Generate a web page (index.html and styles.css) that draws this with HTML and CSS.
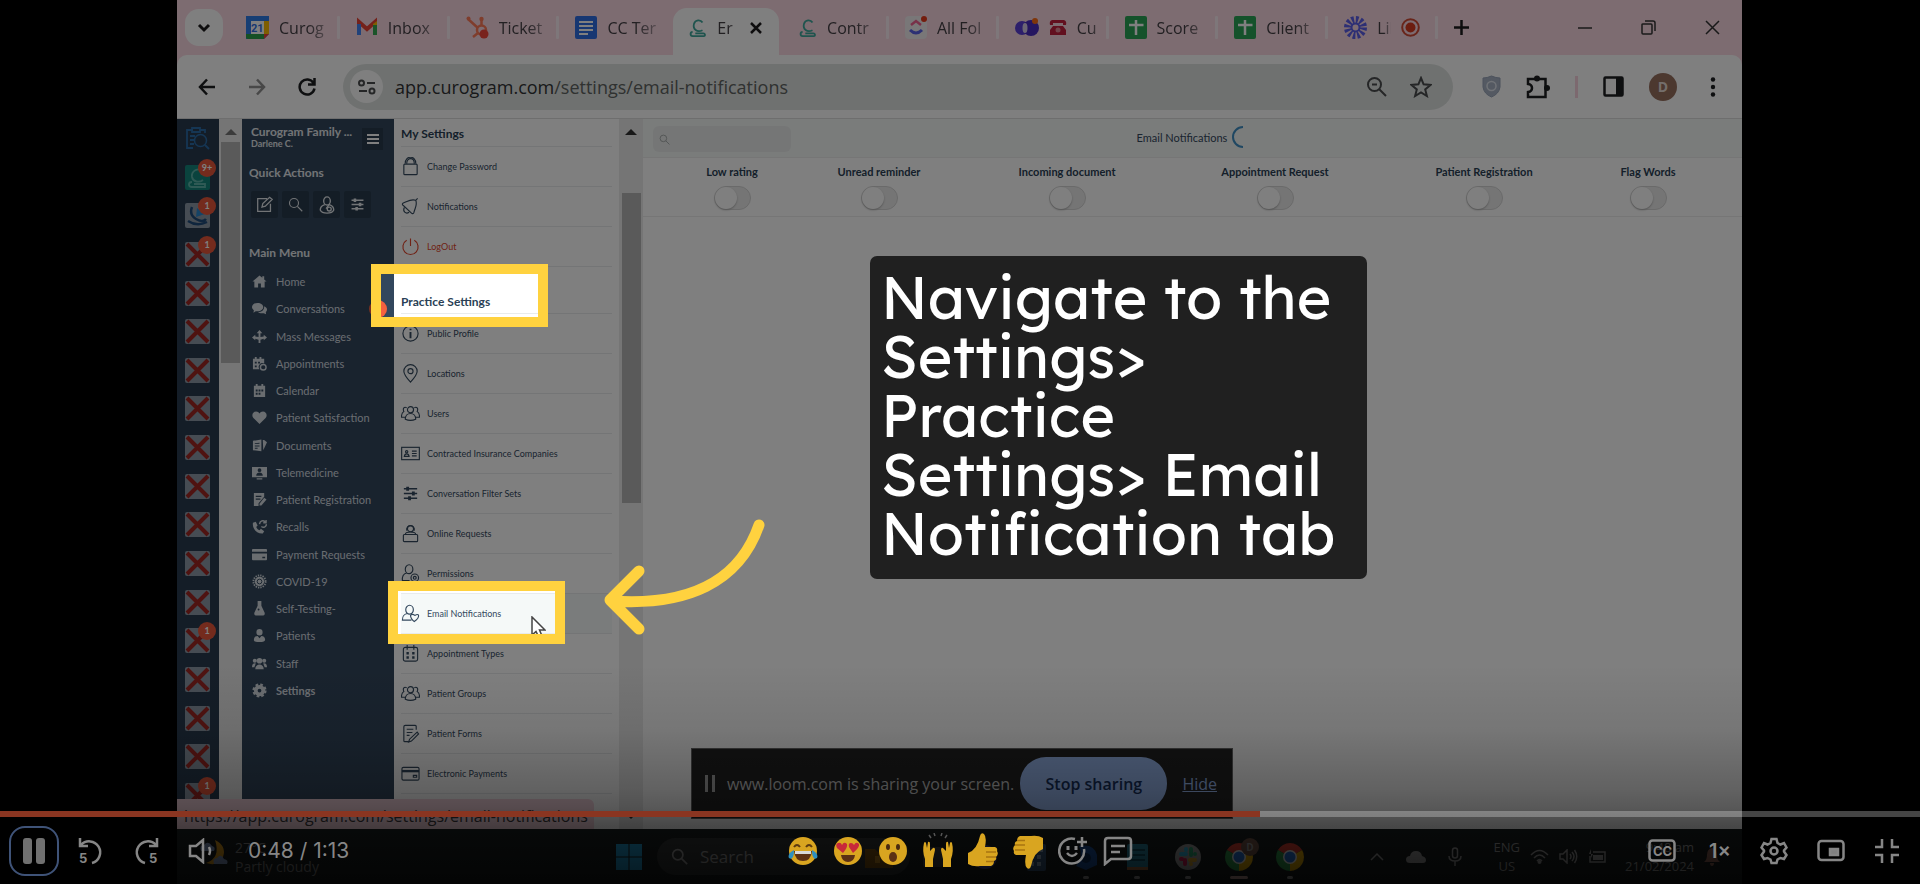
FILE: index.html
```html
<!DOCTYPE html>
<html lang="en">
<head>
    <meta charset="UTF-8">
    <meta name="viewport" content="width=device-width, initial-scale=1.0">
    <title>Email Notifications walkthrough</title>
    <link rel="stylesheet" href="styles.css">
</head>
<body>
    <!-- Icon sprite -->
    <svg class="sprite" aria-hidden="true">
        <symbol id="i-search" viewBox="0 0 20 20"><circle cx="8" cy="8" r="6"/><path d="M12.5 12.5L19 19"/></symbol>
        <symbol id="i-c" viewBox="0 0 20 24"><path d="M15 6.500C13 3 7 3 5.500 8C4 14 9 18 15 15M4 17C1 17 1 21.500 4 21.500H16.500C18.500 21.500 18 18.500 16 18.500H7"/></symbol>
        <symbol id="i-sheet" viewBox="0 0 22 23"><rect width="22" height="23" rx="2" fill="#2aa556"/><path d="M11 4v15M4 9h14.500" stroke="#fff" stroke-width="2.500" fill="none"/></symbol>
        <symbol id="i-broken" viewBox="0 0 25 25"><rect width="25" height="25" rx="2" fill="#8d99a6"/><path d="M2 2L23 23M23 2L2 23" stroke="#9f2622" stroke-width="4" fill="none"/></symbol>
        <symbol id="i-home" viewBox="0 0 16 16"><path d="M8 1.500L0.500 8H2.500V14.500H6.500V10H9.500V14.500H13.500V8H15.500L13 5.800V2.500H11V4Z"/></symbol>
        <symbol id="i-chat" viewBox="0 0 16 16"><path d="M6 2C9.500 2 12 4 12 6.500S9.500 11 6 11L4 10.800L1.500 12.500L2 9.800C.8 9 0 7.800 0 6.500C0 4 2.700 2 6 2ZM13 5.500C15 6.300 16 7.500 16 9C16 10.200 15.500 11 14.700 11.700L15 14L12.500 13C10 13.500 7.500 13 6.500 12C10.500 12 13.200 9.500 13 5.500Z"/></symbol>
        <symbol id="i-mass" viewBox="0 0 16 16"><path d="M8 1L11 4.500H9V8.500L12.500 8V6L16 9L12.500 12V10.500L9 11.500V15H7V11.500L3.500 10.500V12L0 9L3.500 6V8L7 8.500V4.500H5Z"/></symbol>
        <symbol id="i-cal" viewBox="0 0 16 16"><path d="M2 3H4V1H6V3H10V1H12V3H14V15H2ZM4 7V9H6V7ZM7 7V9H9V7ZM10 7V9H12V7ZM4 10.500V12.500H6V10.500ZM7 10.500V12.500H9V10.500Z" fill-rule="evenodd"/></symbol>
        <symbol id="i-appt" viewBox="0 0 16 16"><path d="M1 3H3V1H5V3H8V1H10V3H13V8A4 4 0 0 0 8 14H1ZM3 6V8H5V6ZM6.500 6V8H8.500V6ZM3 10V12H5V10Z" fill-rule="evenodd"/><circle cx="12" cy="12" r="3" fill="none" stroke="currentColor" stroke-width="1.500"/></symbol>
        <symbol id="i-heart" viewBox="0 0 16 16"><path d="M8 15L1.500 8.500C-1 5.500 1 1.500 4.300 1.500C6 1.500 7.300 2.300 8 3.600C8.700 2.300 10 1.500 11.700 1.500C15 1.500 17 5.500 14.500 8.500Z"/></symbol>
        <symbol id="i-docs" viewBox="0 0 16 16"><path d="M1 3L10 1.500V14L1 13ZM3 5.500V6.500L8 6V5ZM3 8V9H8V8ZM3 10.500V11.500H6V10.500ZM11.500 2H13L16 4.500L12 13Z" fill-rule="evenodd"/></symbol>
        <symbol id="i-tele" viewBox="0 0 16 16"><path d="M0 2H16V13H0ZM8 3.500A2 2 0 1 0 8 7.500A2 2 0 1 0 8 3.500ZM4.500 11.500H11.500C11.500 7 4.500 7 4.500 11.500ZM5 14H11V15.500H5Z" fill-rule="evenodd"/></symbol>
        <symbol id="i-form" viewBox="0 0 16 16"><path d="M2 1H13V5L7 12V15H2ZM4 4V5.200H10V4ZM4 7V8.200H9V7ZM13 6L15.500 8L10 14.500H8V12.500Z" fill-rule="evenodd"/></symbol>
        <symbol id="i-phone" viewBox="0 0 16 16"><path d="M1 4L4 3L6 7L4.500 8.500C5.500 10.500 6.500 11.500 8 12L9.500 10.500L13 13L11.500 15.500C5 16 0 10 1 4Z"/><path d="M8 5.500C8.500 1.500 12 1 14 3M15 1V4H12M15.500 5.500C15 9 12 9.500 10 8" fill="none" stroke="currentColor" stroke-width="1.500"/></symbol>
        <symbol id="i-card" viewBox="0 0 16 16"><path d="M1 2H15Q16 2 16 3V5H0V3Q0 2 1 2ZM0 7H16V13Q16 14 15 14H1Q0 14 0 13ZM11 10.500V12H14V10.500Z" fill-rule="evenodd"/></symbol>
        <symbol id="i-virus" viewBox="0 0 16 16"><circle cx="8" cy="8" r="5"/><circle cx="8" cy="8" r="6.500" fill="none" stroke="currentColor" stroke-width="2" stroke-dasharray="1.400 1.150"/><circle cx="8" cy="8" r="2.500" fill="none" stroke="#32475d"/></symbol>
        <symbol id="i-flask" viewBox="0 0 16 16"><path d="M6 0H10V5L13.500 12.500Q14 15.500 12 15.500H4Q2 15.500 2.500 12.500L6 5ZM7 8A1 1 0 1 0 7 10A1 1 0 1 0 7 8Z" fill-rule="evenodd"/></symbol>
        <symbol id="i-person" viewBox="0 0 16 16"><path d="M8 1A3.300 3.500 0 1 1 8 8A3.300 3.500 0 1 1 8 1ZM2 13C2 9.500 4 8.500 6 8.500L8 11L10 8.500C12.500 8.500 14 10 14 12.500Q14 15 8 15Q2 15 2 13Z"/></symbol>
        <symbol id="i-staff" viewBox="0 0 16 16"><circle cx="8" cy="5" r="3"/><circle cx="3" cy="5" r="2.200"/><circle cx="13" cy="5" r="2.200"/><path d="M3.500 14C3.500 7.500 12.500 7.500 12.500 14ZM0 12C0 8 2.500 7.500 4 8L2.500 12ZM16 12C16 8 13.500 7.500 12 8L13.500 12Z"/></symbol>
        <symbol id="i-gear" viewBox="0 0 16 16"><circle cx="8" cy="8" r="4" fill="none" stroke="currentColor" stroke-width="4"/><circle cx="8" cy="8" r="6.300" fill="none" stroke="currentColor" stroke-width="2.500" stroke-dasharray="2.800 2.150"/></symbol>
        <symbol id="o-lock" viewBox="0 0 20 20"><rect x="3" y="7.500" width="14" height="11" rx="1"/><path d="M6 7C6 0 14 0 14 7M4.500 7C4 -2 16 -2 15.500 7"/></symbol>
        <symbol id="o-bell" viewBox="0 0 20 20"><path d="M17.500 1.500L15.500 3.500C11 1.500 8 4 2 6.500C1 7.500 1.500 8.500 2.500 9L11 17C12 18 13 17.500 13.500 16.500C15 11 17.500 8 15.500 3.500M3.500 11C1.500 15 5 18.500 8.500 16"/></symbol>
        <symbol id="o-power" viewBox="0 0 20 20"><path d="M6 3.500A8 8 0 1 0 14 3.500M10 1.500V9.500"/></symbol>
        <symbol id="o-info" viewBox="0 0 20 20"><circle cx="10" cy="10" r="8"/><path d="M10 8.500V15M10 5V6.500" stroke-width="2"/></symbol>
        <symbol id="o-pin" viewBox="0 0 20 20"><path d="M10 19C5 13.500 3 10.500 3 7.500A7 6.800 0 0 1 17 7.500C17 10.500 15 13.500 10 19Z"/><circle cx="10" cy="7.500" r="2.700"/></symbol>
        <symbol id="o-group" viewBox="0 0 20 20"><circle cx="10" cy="6" r="3.200"/><path d="M4.500 16C4.500 8 15.500 8 15.500 16Q10 18.500 4.500 16ZM6 4C3.500 2.500 1.500 4.500 3 8C1 9 .5 11 .5 14H4M14 4C16.500 2.500 18.500 4.500 17 8C19 9 19.500 11 19.500 14H16"/></symbol>
        <symbol id="o-id" viewBox="0 0 20 20"><rect x=".7" y="3.500" width="18.600" height="13"/><circle cx="6" cy="8.200" r="1.200"/><path d="M3.500 13H8.500C8 9.500 4 9.500 3.500 13ZM11.500 7.500H16.500M11.500 10H16.500M11.500 12.500H16.500"/></symbol>
        <symbol id="o-sliders" viewBox="0 0 20 20"><path d="M3 5H17M3 10H17M3 15H17" stroke-width="1.500"/><path d="M7 3V7M13 8V12M9 13V17" stroke-width="3"/></symbol>
        <symbol id="o-desk" viewBox="0 0 20 20"><circle cx="10" cy="5" r="3.200"/><path d="M4.500 11C4.500 7.500 15.500 7.500 15.500 11M6 7C5 0 15 0 14 7"/><rect x="2.500" y="11" width="15" height="7.500" rx="1"/></symbol>
        <symbol id="o-user" viewBox="0 0 20 20"><ellipse cx="8.500" cy="5.500" rx="4" ry="4.700"/><path d="M6 9.500C2 10.500 1 13 1.500 17.500H9"/><circle cx="14.500" cy="14.500" r="4"/><circle cx="14.500" cy="14.500" r="1.500"/></symbol>
        <symbol id="o-usermail" viewBox="0 0 20 20"><ellipse cx="9" cy="6" rx="4" ry="4.700"/><path d="M6.500 10C2 11 1.500 13.500 1.500 17H11M10 12Q12 10 14.500 12Q18 10 18.500 12Q19 15 14 18.500Q10 15 10 12Z"/></symbol>
        <symbol id="o-patient" viewBox="0 0 20 20"><ellipse cx="10" cy="5.500" rx="3.700" ry="4.500"/><path d="M7.500 9.500C3 11 2.500 13 2.500 15.500Q4 19 10 19T17.500 15.500C17.500 13 17 11 12.500 9.500L9 14"/><circle cx="12.500" cy="14.500" r="2.200"/></symbol>
        <symbol id="o-cal" viewBox="0 0 20 20"><rect x="2.500" y="3.500" width="15" height="14.500" rx="2"/><path d="M6.500 1V6M13.500 1V6"/><path d="M7 8.500V11M7 13V15.500M13 8.500V11M13 13V15.500" stroke-width="2.500"/></symbol>
        <symbol id="o-form" viewBox="0 0 20 20"><path d="M16 6V2.500Q16 1.500 15 1.500H4.500Q3 1.500 3 3V17.500Q3 18.500 4 18.500H8M6 5.500H13M6 9H12M6 12H9M17 8.500L9 16L8 19L11 18L18.500 10.500Z"/></symbol>
        <symbol id="o-card" viewBox="0 0 20 20"><rect x="1" y="3.500" width="18" height="13.500" rx="1.500"/><path d="M1 7.500H19" stroke-width="2.500"/><path d="M13 12H16.500V14H13Z"/></symbol>
        <symbol id="i-chrome" viewBox="0 0 28 28"><path d="M14 14L1.900 7A14 14 0 0 1 26.100 7Z" fill="#ea4335"/><path d="M14 14L26.100 7A14 14 0 0 1 14 28Z" fill="#fbbc04"/><path d="M14 14L14 28A14 14 0 0 1 1.900 7Z" fill="#34a853"/><circle cx="14" cy="14" r="7" fill="#fff"/><circle cx="14" cy="14" r="5.500" fill="#2b7de9"/></symbol>
    </svg>

    <div class="player">
        <div class="frame">
            <!-- Browser tabs -->
            <div class="tab-strip">
                <button class="tab-search" aria-label="Search tabs"><svg width="14" height="14" viewBox="0 0 14 14"><path d="M2 4L7 9L12 4" fill="none" stroke="#1d1b1d" stroke-width="3"/></svg></button>
                <div class="tabs">
                    <div class="tab"><svg width="23" height="23" viewBox="0 0 23 23"><path d="M0 0H23V18L18 23H0Z" fill="#2f7de8"/><path d="M18 5H23V18H18Z" fill="#fbbc04"/><path d="M0 18H18V23H2Q0 23 0 21Z" fill="#2aa04a"/><path d="M18 18H23L18 23Z" fill="#ea4335"/><rect x="5" y="5" width="13" height="13" fill="#fff"/><text x="5" y="16" class="cal-day">21</text></svg><span>Curog</span></div>
                    <div class="tab"><svg width="22" height="23" viewBox="0 0 22 23"><path d="M3 19V6L11 13L19 6V19" fill="none" stroke="#ea4335" stroke-width="4"/><path d="M3 8V19" stroke="#4285f4" stroke-width="4"/><path d="M19 8V19" stroke="#34a853" stroke-width="4"/><path d="M17 8L21 5V9H17Z" fill="#fbbc04"/></svg><span>Inbox</span></div>
                    <div class="tab"><svg width="23" height="23" viewBox="0 0 23 23"><g fill="none" stroke="#ff7a59" stroke-width="2.500"><circle cx="15.500" cy="14" r="4.500"/><path d="M15.500 9V3M12 12L2 3M12 17L7 21"/></g><circle cx="2.500" cy="2.500" r="2" fill="#ff7a59"/><circle cx="15.500" cy="3" r="2.200" fill="#ff7a59"/><circle cx="18" cy="18" r="4.500" fill="#f2463a"/></svg><span>Ticket</span></div>
                    <div class="tab"><svg width="22" height="23" viewBox="0 0 22 23"><rect width="22" height="23" rx="2" fill="#2f6fe4"/><path d="M4 6H18M4 10H18M4 14H18M4 18H13" stroke="#fff" stroke-width="2"/></svg><span>CC Ter</span></div>
                    <div class="tab active"><svg class="line teal" width="18" height="23"><use href="#i-c"/></svg><span>Er</span><button aria-label="Close tab"><svg width="12" height="12" viewBox="0 0 12 12"><path d="M1 1L11 11M11 1L1 11" stroke="#1d1b1d" stroke-width="2.500"/></svg></button></div>
                    <div class="tab"><svg class="line teal" width="18" height="23"><use href="#i-c"/></svg><span>Contr</span></div>
                    <div class="tab"><svg width="22" height="23" viewBox="0 0 22 23"><rect width="22" height="23" rx="4" fill="#f2eef0"/><path d="M6 9L11 5L16 9" fill="none" stroke="#f06292" stroke-width="2.500"/><path d="M5 14Q11 20 17 14" fill="none" stroke="#5a62e8" stroke-width="3"/><circle cx="19" cy="3" r="3" fill="#e93a1c"/></svg><span>All Fol</span></div>
                    <div class="tab"><svg width="24" height="23" viewBox="0 0 24 23"><ellipse cx="7" cy="12" rx="7" ry="7" fill="#5a3fd6"/><ellipse cx="16" cy="12" rx="8" ry="8" fill="#4a2cc0"/><ellipse cx="10" cy="12" rx="2.500" ry="5" fill="#d8cde8"/><circle cx="20" cy="5" r="3" fill="#ff6a13"/></svg><svg class="tel" width="18" height="15" viewBox="0 0 18 15"><path d="M3 0H15Q18 1 17 5H14V3H4V5H1Q0 1 3 0ZM4 6H14L17 10V15H1V10Z" fill="#c4213f"/><circle cx="9" cy="10" r="2.500" fill="#e58a98"/></svg><span>Cu</span></div>
                    <div class="tab"><svg width="22" height="23"><use href="#i-sheet"/></svg><span>Score</span></div>
                    <div class="tab"><svg width="22" height="23"><use href="#i-sheet"/></svg><span>Client</span></div>
                    <div class="tab"><svg width="23" height="23" viewBox="0 0 23 23"><circle cx="11.500" cy="11.500" r="8" fill="none" stroke="#5b5ee8" stroke-width="7" stroke-dasharray="2.400 1.800"/><circle cx="11.500" cy="11.500" r="4" fill="none" stroke="#5b5ee8" stroke-width="2"/></svg><span>Lib</span><svg width="19" height="19" viewBox="0 0 19 19"><circle cx="9.500" cy="9.500" r="8.300" fill="none" stroke="#d14a35" stroke-width="2"/><circle cx="9.500" cy="9.500" r="5" fill="#d83a20"/></svg></div>
                </div>
                <button class="new-tab" aria-label="New tab"><svg width="15" height="15" viewBox="0 0 15 15"><path d="M7.500 0V15M0 7.500H15" stroke="#1d1b1d" stroke-width="2.500"/></svg></button>
                <div class="window-buttons">
                    <button aria-label="Minimize"><svg width="15" height="15" viewBox="0 0 15 15"><path d="M1 8H15" stroke="#333" stroke-width="1.500"/></svg></button>
                    <button aria-label="Restore"><svg width="15" height="15" viewBox="0 0 15 15"><path d="M1 4.500Q1 4 2 4H10Q11 4 11 5V13Q11 14 10 14H2Q1 14 1 13ZM4 1H12Q14 1 14 3V11" fill="none" stroke="#333" stroke-width="1.500"/></svg></button>
                    <button aria-label="Close"><svg width="15" height="15" viewBox="0 0 15 15"><path d="M1 1L14 14M14 1L1 14" stroke="#333" stroke-width="1.500"/></svg></button>
                </div>
            </div>

            <!-- Address bar -->
            <div class="toolbar">
                <div class="nav-buttons">
                    <button aria-label="Back"><svg width="18" height="18" viewBox="0 0 18 18"><path d="M17 9H2M9 1.500L2 9L9 16.500"/></svg></button>
                    <button aria-label="Forward" class="off"><svg width="18" height="18" viewBox="0 0 18 18"><path d="M1 9H16M9 1.500L16 9L9 16.500"/></svg></button>
                    <button aria-label="Reload"><svg width="18" height="18" viewBox="0 0 18 18"><path d="M15.500 5A7.500 7.500 0 1 0 16.500 10.500M16.500 0V6.500H10"/></svg></button>
                </div>
                <div class="omnibox">
                    <span class="site-info"><svg width="18" height="16" viewBox="0 0 18 16"><path d="M9 4H17M1 12H9" stroke-width="2"/><circle cx="3.500" cy="4" r="2.500"/><circle cx="14" cy="12" r="2.500"/></svg></span>
                    <span class="url">app.curogram.com<i>/settings/email-notifications</i></span>
                    <svg width="20" height="20" viewBox="0 0 20 20"><circle cx="7.500" cy="7.500" r="6.500"/><path d="M12 12L19 19M5 7.500H10"/></svg>
                    <svg width="22" height="22" viewBox="0 0 22 22"><path d="M11 2L13.600 8.300L20.500 8.900L15.200 13.400L16.900 20L11 16.400L5.100 20L6.800 13.400L1.500 8.900L8.400 8.300Z"/></svg>
                </div>
                <div class="extensions">
                    <svg width="19" height="23" viewBox="0 0 19 23"><path d="M9.500 1Q14 3 18 3V12Q17 19 9.500 22Q2 19 1 12V3Q5 3 9.500 1Z" fill="#a9b3c4" stroke="#97a3b8"/><circle cx="9.500" cy="11" r="4.500" fill="none" stroke="#e0e5ee" stroke-width="1.500"/></svg>
                    <svg width="24" height="24" viewBox="0 0 24 24"><path d="M2 4H19.500V22H2V17Q6 16.500 6 13T2 9Z" fill="none" stroke="#1c1e20" stroke-width="2.500"/><circle cx="11" cy="3.500" r="3" fill="#1c1e20"/><circle cx="21" cy="13" r="3" fill="#1c1e20"/></svg>
                    <span class="divider"></span>
                    <svg width="21" height="21" viewBox="0 0 21 21"><rect x="1.500" y="1.500" width="18" height="18" rx="1" fill="none" stroke="#1c1e20" stroke-width="2.500"/><path d="M13 1H20V20H13Z" fill="#1c1e20"/></svg>
                    <span class="avatar">D</span>
                    <svg width="6" height="20" viewBox="0 0 6 20"><g fill="#1c1e20"><circle cx="3" cy="2.500" r="2.200"/><circle cx="3" cy="10" r="2.200"/><circle cx="3" cy="17.500" r="2.200"/></g></svg>
                </div>
            </div>

            <!-- Web page -->
            <div class="page">
                <div class="app-rail">
                    <span class="app"><svg class="line blue" width="25" height="25" viewBox="0 0 25 25"><path d="M8 22H2V4H8M15 4H20V7M7 2H15V6H7ZM5 10H10M5 14H9M5 18H9M20 19L24 23" stroke-width="1.800"/><circle cx="15.500" cy="14.500" r="6"/></svg></span>
                    <span class="app"><svg width="25" height="25" viewBox="0 0 25 25"><rect width="25" height="25" rx="2" fill="#14877c"/><path d="M18 6C13 2 6 6 7 12C8 17 14 18 18 15M7 17C3 17 3 22 7 22H20V19H9" fill="none" stroke="#5fb5ab" stroke-width="1.800"/></svg><b>9+</b></span>
                    <span class="app"><svg width="25" height="25" viewBox="0 0 25 25"><rect width="25" height="25" rx="2" fill="#8d99a6"/><path d="M3 18Q12 24 22 19M7 4Q4 12 11 16T21 16" fill="none" stroke="#1f4b7a" stroke-width="2.500"/><path d="M12 5L20 11L11 14Z" fill="#2b86cc"/></svg><b>1</b></span>
                    <span class="app"><svg width="25" height="25"><use href="#i-broken"/></svg><b>1</b></span>
                    <span class="app"><svg width="25" height="25"><use href="#i-broken"/></svg></span>
                    <span class="app"><svg width="25" height="25"><use href="#i-broken"/></svg></span>
                    <span class="app"><svg width="25" height="25"><use href="#i-broken"/></svg></span>
                    <span class="app"><svg width="25" height="25"><use href="#i-broken"/></svg></span>
                    <span class="app"><svg width="25" height="25"><use href="#i-broken"/></svg></span>
                    <span class="app"><svg width="25" height="25"><use href="#i-broken"/></svg></span>
                    <span class="app"><svg width="25" height="25"><use href="#i-broken"/></svg></span>
                    <span class="app"><svg width="25" height="25"><use href="#i-broken"/></svg></span>
                    <span class="app"><svg width="25" height="25"><use href="#i-broken"/></svg></span>
                    <span class="app"><svg width="25" height="25"><use href="#i-broken"/></svg><b>1</b></span>
                    <span class="app"><svg width="25" height="25"><use href="#i-broken"/></svg></span>
                    <span class="app"><svg width="25" height="25"><use href="#i-broken"/></svg></span>
                    <span class="app"><svg width="25" height="25"><use href="#i-broken"/></svg></span>
                    <span class="app"><svg width="25" height="25"><use href="#i-broken"/></svg><b>1</b></span>
                </div>
                <div class="scrollbar rail-scroll"><span class="arrow-up"></span><span class="thumb"></span></div>

                <nav class="sidebar">
                    <div class="practice">
                        <div><strong>Curogram Family ...</strong><small>Darlene C.</small></div>
                        <button aria-label="Menu"><svg width="12" height="12" viewBox="0 0 12 12"><path d="M0 2H12M0 6H12M0 10H12" stroke="#fff" stroke-width="2"/></svg></button>
                    </div>
                    <h2>Quick Actions</h2>
                    <div class="quick">
                        <button aria-label="Compose"><svg class="line" width="17" height="17" viewBox="0 0 20 20"><path d="M13 3H2V18H17V9M7 13L8 9L16 1.500L19 4L11 12Z"/></svg></button>
                        <button aria-label="Search"><svg class="line" width="15" height="15"><use href="#i-search"/></svg></button>
                        <button aria-label="Patient"><svg class="line" width="18" height="18"><use href="#o-patient"/></svg></button>
                        <button aria-label="Filters"><svg class="line" width="17" height="17"><use href="#o-sliders"/></svg></button>
                    </div>
                    <h2>Main Menu</h2>
                    <div class="menu">
                        <a href="#"><svg><use href="#i-home"/></svg>Home</a>
                        <a href="#"><svg><use href="#i-chat"/></svg>Conversations<b class="dot"></b></a>
                        <a href="#"><svg><use href="#i-mass"/></svg>Mass Messages</a>
                        <a href="#"><svg><use href="#i-appt"/></svg>Appointments</a>
                        <a href="#"><svg><use href="#i-cal"/></svg>Calendar</a>
                        <a href="#"><svg><use href="#i-heart"/></svg>Patient Satisfaction</a>
                        <a href="#"><svg><use href="#i-docs"/></svg>Documents</a>
                        <a href="#"><svg><use href="#i-tele"/></svg>Telemedicine</a>
                        <a href="#"><svg><use href="#i-form"/></svg>Patient Registration</a>
                        <a href="#"><svg><use href="#i-phone"/></svg>Recalls</a>
                        <a href="#"><svg><use href="#i-card"/></svg>Payment Requests</a>
                        <a href="#"><svg><use href="#i-virus"/></svg>COVID-19</a>
                        <a href="#"><svg><use href="#i-flask"/></svg>Self-Testing-</a>
                        <a href="#"><svg><use href="#i-person"/></svg>Patients</a>
                        <a href="#"><svg><use href="#i-staff"/></svg>Staff</a>
                        <a href="#" class="current"><svg><use href="#i-gear"/></svg>Settings</a>
                    </div>
                </nav>

                <div class="settings">
                    <h2>My Settings</h2>
                    <a href="#"><svg><use href="#o-lock"/></svg>Change Password</a>
                    <a href="#"><svg><use href="#o-bell"/></svg>Notifications</a>
                    <a href="#" class="logout"><svg><use href="#o-power"/></svg>LogOut</a>
                    <h2 class="second">Practice Settings</h2>
                    <a href="#"><svg><use href="#o-info"/></svg>Public Profile</a>
                    <a href="#"><svg><use href="#o-pin"/></svg>Locations</a>
                    <a href="#"><svg><use href="#o-group"/></svg>Users</a>
                    <a href="#"><svg><use href="#o-id"/></svg>Contracted Insurance Companies</a>
                    <a href="#"><svg><use href="#o-sliders"/></svg>Conversation Filter Sets</a>
                    <a href="#"><svg><use href="#o-desk"/></svg>Online Requests</a>
                    <a href="#"><svg><use href="#o-user"/></svg>Permissions</a>
                    <a href="#" class="current"><svg><use href="#o-usermail"/></svg>Email Notifications</a>
                    <a href="#"><svg><use href="#o-cal"/></svg>Appointment Types</a>
                    <a href="#"><svg><use href="#o-group"/></svg>Patient Groups</a>
                    <a href="#"><svg><use href="#o-form"/></svg>Patient Forms</a>
                    <a href="#"><svg><use href="#o-card"/></svg>Electronic Payments</a>
                </div>
                <div class="scrollbar settings-scroll"><span class="arrow-up"></span><span class="thumb"></span><span class="arrow-down"></span></div>

                <main class="content">
                    <header>
                        <label class="search"><svg class="line" width="11" height="11"><use href="#i-search"/></svg><input type="text" aria-label="Search"></label>
                        <h1>Email Notifications</h1>
                        <svg class="spinner" width="14" height="22" viewBox="0 0 14 22"><path d="M13 1A10 10 0 0 0 13 21" fill="none" stroke="#3f8fc4" stroke-width="2"/></svg>
                    </header>
                    <div class="toggles">
                        <label>Low rating<input type="checkbox"></label>
                        <label>Unread reminder<input type="checkbox"></label>
                        <label>Incoming document<input type="checkbox"></label>
                        <label>Appointment Request<input type="checkbox"></label>
                        <label>Patient Registration<input type="checkbox"></label>
                        <label>Flag Words<input type="checkbox"></label>
                    </div>
                </main>

                <div class="status-url">https://app.curogram.com/settings/email-notifications</div>
                <div class="share-bar">
                    <span class="grip"></span>
                    <span class="share-text">www.loom.com is sharing your screen.</span>
                    <button>Stop sharing</button>
                    <a href="#">Hide</a>
                </div>
            </div>

            <!-- Windows taskbar -->
            <div class="taskbar">
                <div class="weather">
                    <svg width="30" height="30" viewBox="0 0 30 30"><path d="M16 2Q28 8 24 19Q19 29 7 25Q22 20 16 2Z" fill="#e6a21c"/><path d="M15 26Q13 20 18 20Q22 15 25 21Q30 22 28 26Z" fill="#8fa6d0"/><path d="M2 13Q0 7 5 7Q9 2 13 8Q17 9 15 13Z" fill="#8fa6d0"/></svg>
                    <p>27°C<br>Partly cloudy</p>
                </div>
                <svg class="win" width="26" height="26" viewBox="0 0 26 26"><path d="M0 0H12.500V12.500H0ZM13.500 0H26V12.500H13.500ZM0 13.500H12.500V26H0ZM13.500 13.500H26V26H13.500Z" fill="#22a4dc"/></svg>
                <div class="task-search">
                    <svg class="line" width="17" height="17"><use href="#i-search"/></svg><span>Search</span>
                    <svg class="folder" width="28" height="22" viewBox="0 0 28 22"><path d="M0 3H10L13 6H28V22H0Z" fill="#8a5a10"/><rect x="10" y="10" width="5" height="7" fill="#d09020"/></svg>
                </div>
                <div class="apps">
                    <svg width="28" height="28" viewBox="0 0 28 28"><rect x="4" y="4" width="20" height="20" rx="2" fill="#44474a"/></svg>
                    <svg width="28" height="28" viewBox="0 0 28 28"><circle cx="15" cy="14" r="12" fill="#4a4f9c"/></svg>
                    <svg width="28" height="28" viewBox="0 0 28 28"><rect x="6" y="1" width="19" height="27" rx="2" fill="#3b5f85"/><path d="M9 5H22V9H9ZM9 12H13V16H9ZM16 12H20V16H16ZM9 19H13V23H9ZM16 19H20V23H16Z" fill="#9fb8d0"/></svg>
                    <span class="open"><svg width="28" height="28" viewBox="0 0 28 28"><path d="M7 3Q22 0 25 12V22L14 27L4 23Q12 14 7 3Z" fill="#1c56a8"/><circle cx="14" cy="15" r="5" fill="#113466"/></svg></span>
                    <span class="open"><svg width="28" height="28" viewBox="0 0 28 28"><rect x="4" y="1" width="21" height="25" rx="2" fill="#2a8ca8"/><path d="M7 7H22M7 12H22M7 17H22" stroke="#14566a" stroke-width="2"/><path d="M4 24H25V27H4Z" fill="#b07040"/></svg></span>
                    <span class="open"><svg width="28" height="28" viewBox="0 0 28 28"><circle cx="14" cy="14" r="13" fill="#aaa"/><g fill="none" stroke-width="4" stroke-linecap="round"><path d="M7 11H12M12 6V7" stroke="#36c5f0"/><path d="M17 6V12M21 11V11" stroke="#2eb67d"/><path d="M11 17V21M7 16H8" stroke="#e01e5a"/><path d="M16 17H21M17 21V21" stroke="#ecb22e"/></g></svg></span>
                    <span class="open on"><svg width="28" height="28"><use href="#i-chrome"/></svg><small>D</small></span>
                    <span class="open"><svg width="28" height="28"><use href="#i-chrome"/></svg></span>
                </div>
                <div class="tray">
                    <svg width="14" height="14" viewBox="0 0 14 14"><path d="M1 10L7 4L13 10" class="stroke"/></svg>
                    <svg width="20" height="14" viewBox="0 0 20 14"><path d="M4 13Q0 13 0 9.500T4 6Q5 1 10 1T16 6Q20 7 20 10T17 13Z"/></svg>
                    <svg width="14" height="20" viewBox="0 0 14 20"><rect x="4.500" y="1" width="5" height="10" rx="2.500" class="stroke"/><path d="M1 9Q1 14 7 14T13 9M7 14V19" class="stroke"/></svg>
                    <p>ENG<br>US</p>
                    <svg width="19" height="15" viewBox="0 0 19 15"><path d="M1 6Q9.500 -3 18 6M4 9Q9.500 3 15 9M7 12Q9.500 9 12 12" class="stroke"/><circle cx="9.500" cy="13" r="2"/></svg>
                    <svg width="19" height="15" viewBox="0 0 19 15"><path d="M1 5H4L8 1V14L4 10H1ZM11 5Q13 7.500 11 10M13 3Q17 7.500 13 12M15.500 1Q20 7.500 15.500 14" class="stroke"/></svg>
                    <svg width="19" height="15" viewBox="0 0 19 15"><path d="M5 3H17V13H2V7" class="stroke"/><path d="M5 6H15V11H5ZM3 0L1 5H5L3 9Z"/></svg>
                    <p class="clock">9:48 am<br>21/02/2024</p>
                    <svg width="16" height="18" viewBox="0 0 16 18"><path d="M8 0Q13 1 13 7Q13 12 16 14H0Q3 12 3 7Q3 1 8 0ZM6 15H10Q10 18 8 18T6 15Z" fill="#9b6a5c"/></svg>
                </div>
            </div>

            <svg class="cursor" width="15" height="23" viewBox="0 0 15 23"><path d="M1 1V19L5 15.500L8 21.500L11 20L8.500 14H14Z" fill="#fff" stroke="#444" stroke-width="1.500"/></svg>
            <div class="dim"></div>
            <div class="highlight first"></div>
            <div class="highlight email"></div>
            <svg class="pointer" width="168" height="120" viewBox="0 0 168 120"><path d="M159 9C139 67 86 90 12 85M39 55L10 84L39 113" fill="none" stroke="#ffd23f" stroke-width="11" stroke-linecap="round" stroke-linejoin="round"/></svg>
            <div class="callout">Navigate to the Settings&gt; Practice Settings&gt; Email Notification tab</div>
        </div>

        <!-- Video controls -->
        <div class="shade"></div>
        <div class="progress"><span></span></div>
        <div class="controls">
            <div class="left">
                <button class="pause" aria-label="Pause"><svg width="24" height="28" viewBox="0 0 24 28"><rect x="1" y="1" width="9" height="26" rx="3" fill="#707070"/><rect x="14" y="1" width="9" height="26" rx="3" fill="#707070"/></svg></button>
                <button aria-label="Back 5 seconds"><svg class="line" width="26" height="32" viewBox="0 0 26 32"><path d="M2 3V11H10M3 10A11 11 0 1 1 14 28"/><text x="1" y="28">5</text></svg></button>
                <button aria-label="Forward 5 seconds"><svg class="line" width="26" height="32" viewBox="0 0 26 32"><path d="M24 3V11H16M23 10A11 11 0 1 0 12 28"/><text x="16" y="28">5</text></svg></button>
                <button aria-label="Volume"><svg class="line" width="26" height="26" viewBox="0 0 26 26"><path d="M2 8H8L15 2V24L8 18H2ZM21 9Q23 13 21 17"/></svg></button>
                <span class="time">0:48 / 1:13</span>
            </div>
            <div class="reactions">
                <button aria-label="Laugh"><svg width="30" height="30" viewBox="0 0 30 30"><circle cx="15" cy="15" r="14" fill="#d9a520"/><path d="M6 11Q9 7 12 11M18 11Q21 7 24 11" fill="none" stroke="#5c3a10" stroke-width="2"/><path d="M6 15H24Q23 25 15 25T6 15Z" fill="#5c3014"/><path d="M7 15H23V18H7Z" fill="#d8d8d8"/><path d="M6 14Q-1 18 1 22Q6 25 6 14ZM24 14Q31 18 29 22Q24 25 24 14Z" fill="#2e8fc0"/></svg></button>
                <button aria-label="Love"><svg width="30" height="30" viewBox="0 0 30 30"><circle cx="15" cy="15" r="14" fill="#d9a520"/><path d="M10 17L4 12Q2 8 5 7Q8 6 9 9Q11 5 14 8Q15 11 10 17ZM20 17L16 11Q15 7 18 7Q20 7 21 9Q23 5 26 8Q27 11 20 17Z" fill="#c8283a"/><path d="M8 19H22Q21 26 15 26T8 19Z" fill="#5c3014"/></svg></button>
                <button aria-label="Wow"><svg width="30" height="30" viewBox="0 0 30 30"><circle cx="15" cy="15" r="14" fill="#d9a520"/><ellipse cx="10" cy="11" rx="2" ry="3" fill="#4a2a10"/><ellipse cx="20" cy="11" rx="2" ry="3" fill="#4a2a10"/><ellipse cx="15" cy="21" rx="4" ry="5" fill="#5c3014"/></svg></button>
                <button aria-label="Celebrate"><svg width="32" height="36" viewBox="0 0 32 36"><path d="M2 10Q3 8 4 10L5 15L6 9Q8 8 8 11L8 18L11 15Q13 14 13 17L11 26V34H3V26Q0 18 2 10ZM30 10Q29 8 28 10L27 15L26 9Q24 8 24 11L24 18L21 15Q19 14 19 17L21 26V34H29V26Q32 18 30 10Z" fill="#d9a520"/><path d="M9 5L7 2M13 3L12 0M19 3L20 0M23 5L25 2" stroke="#555" stroke-width="1.500"/></svg></button>
                <button aria-label="Thumbs up"><svg width="32" height="36" viewBox="0 0 32 36"><path d="M1 20Q10 17 13 3Q14 -1 17 1Q20 4 18 14H28Q31 15 30 18Q32 21 29 24Q30 27 27 28Q27 32 24 33H13Q6 34 1 31Z" fill="#d9a520"/><path d="M19 19H29M19 24H29M19 28.500H27" stroke="#a87410" stroke-width="1.500"/></svg></button>
                <button aria-label="Thumbs down"><svg width="32" height="36" viewBox="0 0 32 36"><path d="M31 16Q22 19 19 33Q18 37 15 35Q12 32 14 22H4Q1 21 2 18Q0 15 3 12Q2 9 5 8Q5 4 8 3H19Q26 2 31 5Z" fill="#d9a520"/><path d="M13 17H3M13 12H3M13 7.500H5" stroke="#a87410" stroke-width="1.500"/></svg></button>
                <button aria-label="Add reaction"><svg class="line" width="30" height="30" viewBox="0 0 30 30"><path d="M17 3A12.500 12.500 0 1 0 26 13M9 17Q14 23 19 17M24 1V11M19 6H29"/><path d="M10 10V14M18 10V14" stroke-width="3"/></svg></button>
                <button aria-label="Comment"><svg class="line" width="30" height="30" viewBox="0 0 30 30"><path d="M2 28V5Q2 2 5 2H25Q28 2 28 5V20Q28 23 25 23H8ZM8 10H22M8 16H17"/></svg></button>
            </div>
            <div class="right">
                <button class="captions" aria-label="Captions"><svg class="line" width="28" height="24" viewBox="0 0 28 24"><rect x="1.500" y="1.500" width="25" height="20" rx="3"/><text x="5" y="17">CC</text></svg></button>
                <button class="speed">1×</button>
                <button aria-label="Settings"><svg class="line" width="28" height="28" viewBox="0 0 28 28"><path d="M11.500 2H16.500L17.500 6L20.500 7.500L24 6L26.500 10.500L24 13.500V14.500L26.500 18L24 22L20.500 21L17.500 22.500L16.500 26H11.500L10.500 22.500L7.500 21L4 22L1.500 18L4 14.500V13.500L1.500 10.500L4 6L7.500 7.500L10.500 6Z"/><circle cx="14" cy="14" r="3.500"/></svg></button>
                <button aria-label="Picture in picture"><svg class="line" width="28" height="24" viewBox="0 0 28 24"><rect x="1.500" y="2" width="25" height="19" rx="3"/><rect x="13" y="10" width="8" height="6" fill="#808080"/></svg></button>
                <button aria-label="Exit full screen"><svg class="line" width="26" height="26" viewBox="0 0 26 26"><path d="M1 9H8V1M25 9H18V1M1 17H8V25M25 17H18V25"/></svg></button>
            </div>
        </div>
    </div>
</body>
</html>
```

FILE: styles.css
```css
* {
    box-sizing: border-box;
}

body {
    margin: 0;
    background-color: #000;
    font-family: 'Open Sans', sans-serif;
}

button {
    padding: 0;
    border: none;
    background: none;
    font: inherit;
    color: inherit;
    display: flex;
    flex: none;
    align-items: center;
    justify-content: center;
    cursor: pointer;
}

p, h1, h2 {
    margin: 0;
}

svg {
    display: block;
    flex: none;
}

.sprite {
    position: absolute;
    width: 0;
    height: 0;
}

.line {
    fill: none;
    stroke: currentColor;
    stroke-width: 1.5;
}

.teal {
    color: #3fa89c;
    stroke-width: 2;
}

.blue {
    color: #2b6ca8;
}

.player {
    position: relative;
    height: 100vh;
    min-height: 700px;
    overflow: hidden;
    padding: 0 178px 0 177px;
}

.frame {
    position: relative;
    height: 100%;
    display: flex;
    flex-direction: column;
    background-color: #fad8e3;
}

/* Tabs */
.tab-strip {
    display: flex;
    align-items: center;
    height: 55px;
    padding: 0 22px 0 8px;
    color: #454045;
}

.tab-search {
    width: 38px;
    height: 37px;
    border-radius: 14px;
    background-color: #fff;
}

.tabs {
    display: grid;
    grid-auto-flow: column;
    grid-auto-columns: minmax(0, 1fr);
    flex: 0 1 1208px;
    min-width: 0;
    align-self: stretch;
    margin-left: 7px;
}

.tab {
    display: flex;
    align-items: center;
    gap: 10px;
    margin-top: 8px;
    padding: 0 5px 8px 16px;
    position: relative;
    font-size: 16px;
}

.tab::after {
    content: '';
    position: absolute;
    right: 0;
    top: 8px;
    width: 3px;
    height: 23px;
    background-color: #fff;
    opacity: 0.6;
    border-radius: 1px;
}

.tab span {
    flex: 1;
    min-width: 0;
    white-space: nowrap;
    mask-image: linear-gradient(to right, #000 50%, rgba(0, 0, 0, 0.2));
}

.tab.active {
    margin-left: 4px;
    padding-right: 17px;
    background-color: #fff;
    border-radius: 14px 14px 0 0;
}

.tab.active + .tab {
    padding-left: 20px;
}

.tab:last-child {
    padding-right: 18px;
}

.tab.active::after, .tab:nth-child(4)::after {
    display: none;
}

.cal-day {
    font: bold 11px 'Roboto', sans-serif;
    fill: #2f6fe4;
}

.new-tab {
    margin-left: 16px;
}

.window-buttons {
    display: flex;
    gap: 49px;
    margin-left: auto;
}

/* Toolbar */
.toolbar {
    display: flex;
    align-items: center;
    height: 64px;
    padding: 0 26px 0 21px;
    background-color: #fff;
    border-radius: 10px 10px 0 0;
    border-bottom: 1px solid #dcdcdc;
}

.nav-buttons {
    display: flex;
    gap: 32px;
}

.nav-buttons svg, .omnibox svg {
    fill: none;
    stroke: #1c1e20;
    stroke-width: 2.5;
}

.nav-buttons .off svg {
    stroke: #909090;
}

.omnibox {
    flex: 1;
    display: flex;
    align-items: center;
    gap: 23px;
    height: 46px;
    margin: 0 29px 0 27px;
    padding: 0 21px 0 7px;
    border-radius: 23px;
    background-color: #dfe3e1;
}

.omnibox svg {
    stroke: #4a4c4e;
    stroke-width: 2;
}

.site-info {
    display: flex;
    align-items: center;
    justify-content: center;
    width: 33px;
    height: 33px;
    margin-right: -11px;
    border-radius: 50%;
    background-color: #fff;
}

.url {
    flex: 1;
    font-size: 18px;
    color: #303234;
}

.url i {
    font-style: normal;
    color: #606462;
}

.extensions {
    display: flex;
    align-items: center;
    gap: 25px;
}

.divider {
    width: 3px;
    height: 22px;
    background-color: #f8d3df;
}

.avatar {
    width: 28px;
    height: 28px;
    margin-right: 8px;
    border-radius: 50%;
    background-color: #98705f;
    color: #e8dcd6;
    font-size: 14px;
    font-weight: bold;
    line-height: 28px;
    text-align: center;
}

/* Web page */
.page {
    position: relative;
    flex: 1;
    min-height: 0;
    display: flex;
    overflow: hidden;
    background-color: #fff;
    font-family: 'Lato', sans-serif;
}

.app-rail {
    width: 42px;
    padding: 7px 9px 21px 8px;
    display: flex;
    flex-direction: column;
    justify-content: space-between;
    background-color: #293b4f;
}

.app {
    position: relative;
}

.app b {
    position: absolute;
    top: -6px;
    right: -6px;
    width: 18px;
    height: 18px;
    border-radius: 50%;
    background-color: #e8573a;
    color: #fff;
    font-size: 9px;
    line-height: 18px;
    text-align: center;
}

.scrollbar {
    display: flex;
    flex-direction: column;
    align-items: center;
    background-color: #eaeaea;
    padding: 10px 2px;
}

.rail-scroll {
    width: 23px;
}

.settings-scroll {
    width: 24px;
}

.arrow-up, .arrow-down {
    border: 6px solid transparent;
    border-top-width: 0;
    border-bottom: 6px solid #777;
}

.settings-scroll .arrow-up {
    border-bottom-color: #333;
}

.arrow-down {
    margin-top: auto;
    border-bottom-width: 0;
    border-top: 6px solid #333;
}

.thumb {
    width: 19px;
    height: 221px;
    margin-top: 7px;
    background-color: #b5b5b5;
}

.settings-scroll .thumb {
    height: 310px;
    margin-top: 58px;
}

.sidebar {
    width: 152px;
    padding: 5px 0 0 7px;
    background-color: #32475d;
    color: #e4e8ec;
}

.practice {
    display: flex;
    justify-content: space-between;
    padding: 0 11px 0 2px;
}

.practice strong, .practice small {
    display: block;
    font-size: 12px;
    line-height: 15px;
}

.practice small {
    font-size: 9px;
    font-weight: bold;
    line-height: 10px;
}

.practice button {
    width: 21px;
    height: 22px;
    margin-top: 4px;
    background-color: #283a4c;
}

.sidebar h2 {
    margin-top: 15px;
    font-size: 12px;
    line-height: 16px;
}

.quick {
    display: flex;
    gap: 4px;
    margin: 10px 0 27px 2px;
}

.quick button {
    width: 27px;
    height: 27px;
    border-radius: 2px;
    background-color: #283a4c;
}

.menu {
    display: grid;
    grid-auto-rows: 1fr;
    height: 436px;
    margin-top: 7px;
}

.menu a {
    display: flex;
    align-items: center;
    gap: 9px;
    padding-left: 3px;
    position: relative;
    font-size: 11px;
    color: #d4dae0;
    text-decoration: none;
}

.menu a.current {
    font-weight: bold;
}

.menu svg {
    width: 15px;
    height: 15px;
    fill: currentColor;
}

.menu .dot {
    position: absolute;
    right: 7px;
    width: 18px;
    height: 18px;
    border-radius: 50%;
    background-color: #f4603f;
}

.settings {
    width: 225px;
    padding: 0 7px;
    white-space: nowrap;
}

.settings h2 {
    height: 28px;
    padding-top: 6px;
    border-bottom: 1px solid #e8ebec;
    font-size: 12px;
    line-height: 18px;
    color: #2a3f55;
}

.settings h2.second {
    height: 47px;
    padding-top: 26px;
}

.settings a {
    display: flex;
    align-items: center;
    gap: 7px;
    height: 40px;
    border-bottom: 1px solid #e8ebec;
    font-size: 9px;
    color: #34495e;
    text-decoration: none;
}

.settings svg {
    width: 19px;
    height: 19px;
    fill: none;
    stroke: currentColor;
    stroke-width: 1.2;
}

.settings a.logout {
    color: #e0452c;
}

.settings a.current {
    background-color: #f5f9f8;
}

.content {
    flex: 1;
    min-width: 0;
}

.content header {
    position: relative;
    display: flex;
    align-items: center;
    justify-content: center;
    gap: 3px;
    height: 39px;
    padding: 0 4px 2px 0;
    background-color: #f4f8f7;
    border-bottom: 1px solid #ececec;
}

.search {
    position: absolute;
    left: 10px;
    top: 7px;
    width: 138px;
    height: 26px;
    display: flex;
    align-items: center;
    padding-left: 6px;
    border-radius: 6px;
    background-color: #ebedec;
    color: #9aa0a0;
}

.search input {
    flex: 1;
    min-width: 0;
    border: none;
    background: none;
    outline: none;
}

.content h1 {
    font-size: 11px;
    font-weight: normal;
    color: #34495e;
}

.toggles {
    display: grid;
    grid-template-columns: 144fr 150fr 226fr 190fr 228fr 100fr;
    padding: 6px 44px 6px 17px;
    border-bottom: 1px solid #ececec;
}

.toggles label {
    display: flex;
    flex-direction: column;
    align-items: center;
    gap: 7px;
    font-size: 11px;
    font-weight: bold;
    line-height: 15px;
    color: #2a3f55;
}

.toggles input {
    appearance: none;
    width: 37px;
    height: 24px;
    margin: 0;
    border: 1px solid #d4d4d4;
    border-radius: 12px;
    background-color: #ebebeb;
}

.toggles input::before {
    content: '';
    display: block;
    width: 22px;
    height: 22px;
    border-radius: 50%;
    background-color: #fff;
    box-shadow: 0 1px 2px #aaa;
}

.status-url {
    position: absolute;
    left: 0;
    bottom: 0;
    height: 30px;
    padding: 0 6px 0 7px;
    border-radius: 0 6px 0 0;
    background-color: #f8d6e1;
    color: #3c3a3c;
    font: 16px/34px 'Open Sans', sans-serif;
}

.share-bar {
    position: absolute;
    left: 514px;
    bottom: 10px;
    width: 542px;
    height: 71px;
    display: flex;
    align-items: center;
    padding: 0 15px 0 13px;
    border: 1px solid #666;
    background-color: #222;
    color: #c8c8c8;
    font: 16px 'Open Sans', sans-serif;
    white-space: nowrap;
}

.grip {
    width: 10px;
    height: 17px;
    margin-right: 12px;
    border: solid #aaa;
    border-width: 0 3px;
}

.share-bar button {
    width: 147px;
    height: 53px;
    margin: 0 15px 0 auto;
    border-radius: 26px;
    background-color: #9dbdf5;
    color: #16305c;
    font-weight: 600;
}

.share-bar a {
    color: #9dbdf5;
}

/* Taskbar */
.taskbar {
    position: relative;
    display: flex;
    align-items: center;
    height: 55px;
    padding-right: 22px;
    background-color: #1a2020;
    color: #a8a8a8;
    font-size: 15px;
    line-height: 19px;
}

.weather {
    display: flex;
    gap: 6px;
    width: 439px;
    padding-left: 22px;
    color: #8c8c8c;
    font-size: 14px;
}

.task-search {
    display: flex;
    align-items: center;
    gap: 12px;
    width: 253px;
    height: 37px;
    margin-left: 15px;
    padding: 0 17px 0 14px;
    border-radius: 19px;
    background-color: #353838;
    font-size: 17px;
}

.task-search .line {
    stroke-width: 2;
}

.folder {
    margin-left: auto;
}

.apps {
    display: flex;
    gap: 23px;
    margin-left: 9px;
}

.open {
    position: relative;
}

.open::after {
    content: '';
    position: absolute;
    left: 11px;
    bottom: -8px;
    width: 6px;
    height: 3px;
    border-radius: 2px;
    background-color: #aaa;
}

.open.on::after {
    left: 5px;
    width: 18px;
    background-color: #d8b0a8;
}

.open small {
    position: absolute;
    top: -5px;
    right: -6px;
    width: 18px;
    height: 18px;
    border-radius: 50%;
    background-color: #7a5a4c;
    font-size: 10px;
    font-weight: bold;
    line-height: 18px;
    text-align: center;
}

.tray {
    display: flex;
    align-items: center;
    gap: 10px;
    margin-left: auto;
    font-size: 13px;
    text-align: center;
}

.tray svg {
    fill: currentColor;
}

.tray svg:nth-child(-n+3) {
    margin-right: 12px;
}

.tray p {
    margin-left: 10px;
}

.tray .clock {
    margin: 0 0 0 8px;
    text-align: right;
}

.tray .stroke {
    fill: none;
    stroke: currentColor;
    stroke-width: 1.5;
}

/* Annotations */
.dim {
    position: absolute;
    inset: 0;
    background-color: rgba(0, 0, 0, 0.5);
    clip-path: polygon(evenodd, 0 0, 100% 0, 100% 100%, 0 100%, 0 0,
        194px 264px, 371px 264px, 371px 327px, 194px 327px, 194px 264px, 0 0,
        211px 581px, 388px 581px, 388px 644px, 211px 644px, 211px 581px, 0 0);
}

.highlight {
    position: absolute;
    width: 177px;
    height: 63px;
    border: 10px solid #ffd23f;
}

.highlight.first {
    left: 194px;
    top: 264px;
}

.highlight.email {
    left: 211px;
    top: 581px;
}

.cursor {
    position: absolute;
    left: 354px;
    top: 616px;
}

.pointer {
    position: absolute;
    left: 423px;
    top: 516px;
}

.callout {
    position: absolute;
    left: 693px;
    top: 256px;
    width: 497px;
    height: 323px;
    padding: 12px 11px;
    border-radius: 7px;
    background-color: #202020;
    color: #fff;
    font: 400 59px/59px 'Lexend', 'Inter', sans-serif;
}

/* Player */
.shade {
    position: absolute;
    left: 0;
    right: 0;
    bottom: 0;
    height: 220px;
    background: linear-gradient(rgba(0, 0, 0, 0), rgba(0, 0, 0, 0.07) 30%, rgba(0, 0, 0, 0.23) 57%, rgba(0, 0, 0, 0.3) 65%, rgba(0, 0, 0, 0.44) 74%, rgba(0, 0, 0, 0.7));
}

.progress {
    position: absolute;
    left: 0;
    right: 0;
    bottom: 67px;
    height: 6px;
    background-color: rgba(255, 255, 255, 0.27);
}

.progress span {
    display: block;
    width: 65.6%;
    height: 100%;
    background-color: #8a3521;
}

.controls {
    position: absolute;
    left: 0;
    right: 0;
    bottom: 0;
    height: 67px;
    padding: 0 20px 0 9px;
    display: grid;
    grid-template-columns: 1fr auto 1fr;
    align-items: center;
    color: #868686;
}

.controls .line {
    stroke-width: 2.5;
}

.controls text {
    font: bold 13px 'Inter', sans-serif;
    fill: currentColor;
    stroke: none;
}

.left, .reactions, .right {
    display: flex;
    align-items: center;
}

.left {
    gap: 29px;
}

.pause {
    width: 50px;
    height: 50px;
    margin-right: -10px;
    border: 2px solid #3f5378;
    border-radius: 16px;
}

.time {
    margin-left: 5px;
    font: 21px 'Inter', sans-serif;
}

.reactions button {
    width: 45px;
}

/* Same optical centre as the window */
.reactions {
    margin-right: -11px;
}

.right {
    justify-content: flex-end;
    gap: 29px;
}

.captions {
    margin-right: 4px;
}

.speed {
    font: 600 20px 'Inter', sans-serif;
}
```
